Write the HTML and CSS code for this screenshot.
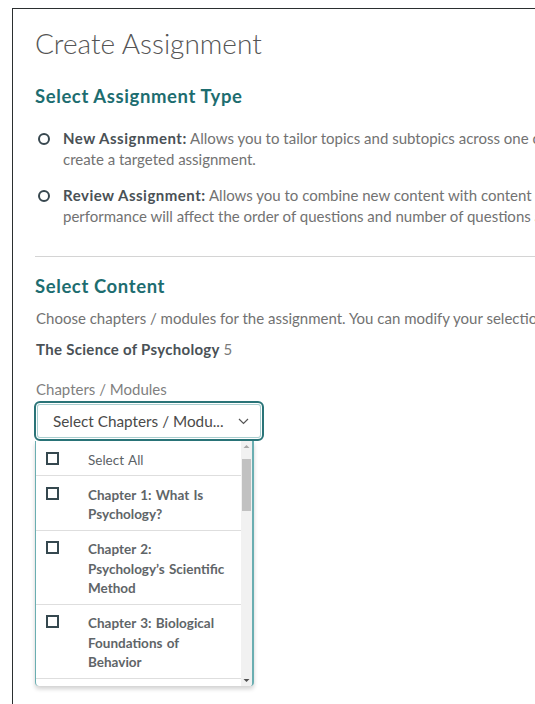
FILE: index.html
```html
<!DOCTYPE html>
<html lang="en">
<head>
<meta charset="utf-8">
<title>Create Assignment</title>
<link rel="stylesheet" href="styles.css">
</head>
<body>
<div class="frame">
  <h1 class="title">Create Assignment</h1>

  <section class="block">
    <h2 class="heading">Select Assignment Type</h2>
    <ul class="options">
      <li class="option">
        <span class="radio"></span>
        <p class="option-text"><b>New Assignment:</b> Allows you to tailor topics and subtopics across one or more chapters to create a targeted assignment.</p>
      </li>
      <li class="option">
        <span class="radio"></span>
        <p class="option-text"><b>Review Assignment:</b> Allows you to combine new content with content they know. Student performance will affect the order of questions and number of questions asked.</p>
      </li>
    </ul>
  </section>

  <hr class="divider">

  <section class="block">
    <h2 class="heading">Select Content</h2>
    <p class="hint">Choose chapters / modules for the assignment. You can modify your selection later.</p>
    <p class="book"><b>The Science of Psychology</b> 5</p>
    <div class="field-label">Chapters / Modules</div>

    <div class="picker">
      <div class="select">
        <span class="select-text">Select Chapters / Modu...</span>
        <svg class="chevron" width="11" height="7" viewBox="0 0 11 7"><path d="M1 1 L5.5 5.5 L10 1" fill="none" stroke="#555" stroke-width="1.2"/></svg>
      </div>
      <div class="menu">
        <ul class="menu-list">
          <li class="menu-row"><span class="check"></span><span class="row-text light">Select All</span></li>
          <li class="menu-row"><span class="check"></span><span class="row-text">Chapter 1: What Is Psychology?</span></li>
          <li class="menu-row"><span class="check"></span><span class="row-text">Chapter 2: Psychology’s Scientific Method</span></li>
          <li class="menu-row"><span class="check"></span><span class="row-text">Chapter 3: Biological Foundations of Behavior</span></li>
          <li class="menu-row"><span class="check"></span><span class="row-text">Chapter 4: Sensation and Perception</span></li>
        </ul>
        <div class="scrollbar">
          <svg class="arrow" width="11" height="11" viewBox="0 0 11 11"><path d="M2.5 7 L5.5 4 L8.5 7 Z" fill="#a8a8a8"/></svg>
          <div class="track"><div class="thumb"></div></div>
          <svg class="arrow" width="11" height="11" viewBox="0 0 11 11"><path d="M2.5 4 L8.5 4 L5.5 7 Z" fill="#505050"/></svg>
        </div>
      </div>
    </div>
  </section>
</div>
</body>
</html>
```

FILE: styles.css
```css
* {
  box-sizing: border-box;
}

html, body {
  margin: 0;
  height: 100%;
  background: #fff;
  overflow: hidden;
}

body {
  font-family: Lato, "Open Sans", sans-serif;
  color: #666;
}

.frame {
  margin: 8px 0 0 12px;
  width: 720px;
  height: 720px;
  border-top: 1px solid #2b2f30;
  border-left: 1px solid #2b2f30;
  padding: 17px 22px 0 22px;
}

.title {
  margin: 0;
  font-size: 28px;
  line-height: 34px;
  font-weight: 300;
  color: #555;
}

.heading {
  margin: 0;
  font-size: 18.5px;
  line-height: 22px;
  font-weight: 700;
  letter-spacing: 0.6px;
  color: #1d6d70;
}

.block {
  margin-top: 25px;
}

.options {
  list-style: none;
  margin: 21px 0 0 0;
  padding: 0 0 0 3px;
  display: flex;
  flex-direction: column;
  gap: 15px;
}

.option {
  display: flex;
  align-items: flex-start;
  gap: 13px;
}

.radio {
  flex: none;
  width: 12px;
  height: 12px;
  margin-top: 5px;
  border: 2px solid #37474f;
  border-radius: 50%;
}

.option-text {
  margin: 0;
  width: 620px;
  font-size: 15px;
  line-height: 21px;
  color: #727272;
}

.option-text b {
  letter-spacing: 0.5px;
  color: #4a5156;
}

.divider {
  margin: 29px 0 0 0;
  border: 0;
  border-top: 1px solid #d4d4d4;
}

.divider + .block {
  margin-top: 18px;
}

.hint {
  margin: 11px 0 0 1px;
  font-size: 15px;
  line-height: 20px;
  white-space: nowrap;
  color: #727272;
}

.book {
  margin: 11px 0 0 1px;
  font-size: 15px;
  line-height: 20px;
  color: #7a7a7a;
}

.book b {
  letter-spacing: 0.3px;
  color: #4a5156;
}

.field-label {
  margin: 20px 0 0 1px;
  font-size: 15px;
  line-height: 20px;
  color: #7f7f7f;
}

.picker {
  width: 230px;
  margin-top: 2px;
  margin-left: -1px;
}

.select {
  height: 40px;
  display: flex;
  align-items: center;
  justify-content: space-between;
  padding: 0 13px 0 17px;
  border: 2px solid #2a7478;
  border-radius: 6px;
  box-shadow: inset 0 0 0 1px #fff, inset 0 0 0 2px #a9cfd0;
  font-size: 15.3px;
  color: #4a4a4a;
}

.menu {
  width: 219px;
  height: 245px;
  margin-left: 1px;
  display: flex;
  border-left: 1px solid #6aaeb1;
  border-right: 2px solid #6aaeb1;
  border-radius: 0 0 4px 4px;
  box-shadow: 0 3px 4px rgba(0, 0, 0, 0.18);
  overflow: hidden;
  background: #fff;
}

.menu-list {
  flex: 1;
  list-style: none;
  margin: 0;
  padding: 0;
  overflow: hidden;
}

.menu-row {
  display: flex;
  align-items: flex-start;
  gap: 29px;
  padding: 9.5px 0 5px 10px;
  border-bottom: 1px solid #dedede;
}

.check {
  flex: none;
  width: 13px;
  height: 13px;
  margin-top: 1px;
  border: 2px solid #35484f;
}

.row-text {
  width: 142px;
  font-size: 13.5px;
  line-height: 19.5px;
  font-weight: 700;
  word-spacing: 1px;
  color: #5f6568;
}

.row-text.light {
  font-weight: 400;
  color: #5c6266;
}

.scrollbar {
  flex: none;
  width: 11px;
  display: flex;
  flex-direction: column;
  background: #f1f1f1;
}

.arrow {
  flex: none;
  display: block;
}

.track {
  flex: 1;
  padding-top: 7px;
}

.thumb {
  height: 52px;
  margin: 0 1px;
  background: #c1c1c1;
}
```
